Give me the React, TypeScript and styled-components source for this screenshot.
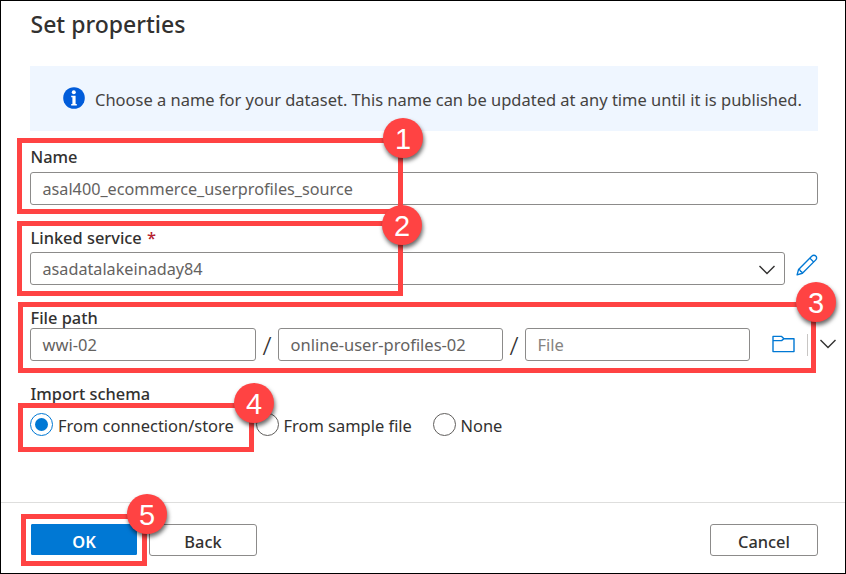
import React from "react";
import styled, { createGlobalStyle } from "styled-components";

const GlobalStyle = createGlobalStyle`
  * { box-sizing: border-box; }
  body { margin: 0; background: #fff; }
  svg { flex-shrink: 0; }
`;

const Panel = styled.main`
  position: relative;
  display: flex;
  flex-direction: column;
  width: 846px;
  height: 574px;
  border: 1px solid #000;
  background: #fff;
  color: #323130;
  font: 400 16.5px/22px "Noto Sans", "Segoe UI", sans-serif;
  overflow: hidden;
  white-space: nowrap;
`;

const Content = styled.div`
  display: flex;
  flex-direction: column;
  height: 501px;
  padding: 0 27px 0 29px;
`;

const Title = styled.h1`
  margin: 0;
  height: 65px;
  padding: 7px 0 0 0.5px;
  font-size: 23px;
  font-weight: 500;
  line-height: 32px;
`;

const Banner = styled.div`
  display: flex;
  align-items: flex-start;
  gap: 10px;
  height: 65px;
  padding: 21px 0 0 33px;
  background: #eff6ff;
  color: #45433f;
  font-size: 16.48px;
`;

const BannerText = styled.span`
  padding-top: 2px;
`;

const Field = styled.section<{ $gap: number; $labelHeight: number }>`
  display: flex;
  flex-direction: column;
  margin-top: ${(p) => p.$gap}px;
  > h2 { height: ${(p) => p.$labelHeight}px; }
`;

const Label = styled.h2`
  margin: 0;
  padding-left: 0.5px;
  font-size: 16.4px;
  font-weight: 500;
  line-height: 22px;
`;

const Required = styled.span`
  margin-left: 1px;
  color: #b5202e;
`;

const FieldRow = styled.div`
  display: flex;
  align-items: center;
  height: 33px;
`;

const Box = styled.div<{ $width: number; $muted?: boolean }>`
  display: flex;
  flex-shrink: 0;
  align-items: center;
  justify-content: space-between;
  width: ${(p) => p.$width}px;
  height: 33px;
  padding: 1px 9px 0 11.5px;
  border: 1.5px solid #8c8b8a;
  border-radius: 3px;
  color: ${(p) => (p.$muted ? "#858381" : "#64625f")};
  font-size: 16.22px;

  svg { margin-top: 1px; }
`;

const PathBox = styled(Box)`
  font-size: 16.5px;
`;

const Slash = styled.span`
  flex-shrink: 0;
  width: 22px;
  padding-top: 1px;
  text-align: center;
  font-size: 26px;
  font-weight: 300;
  line-height: 30px;
`;

const IconButton = styled.span<{ $left: number; $lift?: number }>`
  display: flex;
  margin-left: ${(p) => p.$left}px;
  padding-bottom: ${(p) => p.$lift ?? 0}px;
`;

const Separator = styled.span`
  flex-shrink: 0;
  width: 1px;
  height: 22px;
  margin-left: 12px;
  background: #c8c6c4;
`;

const Radios = styled.div`
  display: flex;
  align-items: center;
  height: 23px;
`;

const Option = styled.div<{ $width: number }>`
  display: flex;
  flex-shrink: 0;
  align-items: center;
  gap: 5px;
  width: ${(p) => p.$width}px;
  font-size: 16.45px;
`;

const OptionText = styled.span`
  padding-top: 2px;
`;

const Radio = styled.span<{ $on?: boolean }>`
  display: flex;
  align-items: center;
  justify-content: center;
  width: 23px;
  height: 23px;
  border: 1.3px solid ${(p) => (p.$on ? "#0078d4" : "#605e5c")};
  border-radius: 50%;

  &::after {
    content: "";
    width: 13px;
    height: 13px;
    border-radius: 50%;
    background: ${(p) => (p.$on ? "#0078d4" : "transparent")};
  }
`;

const Footer = styled.footer`
  display: flex;
  height: 71px;
  padding: 21px 27px 0 30px;
  border-top: 1px solid #dededd;
`;

const Button = styled.div<{ $primary?: boolean; $left?: string }>`
  display: flex;
  align-items: center;
  justify-content: center;
  width: ${(p) => (p.$primary ? 106 : 108)}px;
  height: ${(p) => (p.$primary ? 31 : 32)}px;
  margin-left: ${(p) => p.$left ?? "0"};
  padding-top: ${(p) => (p.$primary ? 4 : 3)}px;
  border: ${(p) => (p.$primary ? "1px solid #0078d4" : "1.5px solid #8c8b8a")};
  border-radius: ${(p) => (p.$primary ? 1 : 3)}px;
  background: ${(p) => (p.$primary ? "#0078d4" : "#fff")};
  color: ${(p) => (p.$primary ? "#fff" : "#323130")};
  font-size: 16.4px;
  font-weight: ${(p) => (p.$primary ? 600 : 500)};
`;

/* Numbered callouts float over the form. */
const Highlight = styled.div<{ $x: number; $y: number; $w: number; $h: number }>`
  position: absolute;
  left: ${(p) => p.$x - 1}px;
  top: ${(p) => p.$y - 1}px;
  width: ${(p) => p.$w}px;
  height: ${(p) => p.$h}px;
  border: 5px solid #ff4343;
`;

const Badge = styled.div<{ $x: number; $y: number }>`
  position: absolute;
  left: ${(p) => p.$x - 1}px;
  top: ${(p) => p.$y - 1}px;
  display: flex;
  align-items: center;
  justify-content: center;
  width: 40px;
  height: 40px;
  padding-top: 1px;
  border-radius: 50%;
  background: #ff4343;
  box-shadow: 1px 3px 4px rgba(0, 0, 0, 0.6);
  color: #fff;
  font: 400 29px/40px "Liberation Sans", Arial, sans-serif;
`;

const Chevron = () => (
  <svg width="16" height="10" viewBox="0 0 16 10" fill="none" stroke="#323130" strokeWidth="1.4">
    <path d="M.5 1 8 8.6 15.5 1" />
  </svg>
);

const InfoIcon = () => (
  <svg width="22" height="22" viewBox="0 0 22 22">
    <circle cx="11" cy="11" r="10.8" fill="#015cda" />
    <circle cx="10.8" cy="5.3" r="2" fill="#fff" />
    <path d="M8.2 8.7h4.4v8.2h1.2v1.6H8.2v-1.6h1.2v-6.6H8.2z" fill="#fff" />
  </svg>
);

const PencilIcon = () => (
  <svg width="22" height="22" viewBox="0 0 24 24" fill="none" stroke="#0078d4" strokeWidth="1.5" strokeLinejoin="round">
    <path d="M1.2 22.8 2.8 16.8 17.4 2.2a2.9 2.9 0 0 1 4.2 0 2.9 2.9 0 0 1 0 4.2L7 21z" />
    <path d="M15.1 4.5 19.3 8.7M2.8 16.8C4 17 4.7 17.4 5 18.8 6.3 19.2 6.8 19.8 7 21" />
  </svg>
);

const FolderIcon = () => (
  <svg width="23" height="18" viewBox="0 0 23 18" fill="none" stroke="#0078d4" strokeWidth="1.4" strokeLinejoin="round">
    <path d="M1 16.6V1.4h8.6l2.4 2.3H22v12.9zM1 5.6h8.6l2.4-1.9" />
  </svg>
);

const highlights = [
  { x: 17, y: 138, w: 386, h: 76 },
  { x: 17, y: 221, w: 386, h: 75 },
  { x: 18, y: 302, w: 798, h: 71 },
  { x: 18, y: 403, w: 236, h: 49 },
  { x: 21, y: 514, w: 126, h: 52 },
];

const badges = [
  { x: 383, y: 118 },
  { x: 382, y: 205 },
  { x: 796, y: 282 },
  { x: 234, y: 383 },
  { x: 127, y: 494 },
];

export default function App() {
  return (
    <Panel>
      <GlobalStyle />
      <Content>
        <Title>Set properties</Title>
        <Banner>
          <InfoIcon />
          <BannerText>Choose a name for your dataset. This name can be updated at any time until it is published.</BannerText>
        </Banner>
        <Field $gap={15} $labelHeight={26}>
          <Label>Name</Label>
          <FieldRow>
            <Box $width={788}>asal400_ecommerce_userprofiles_source</Box>
          </FieldRow>
        </Field>
        <Field $gap={22} $labelHeight={25}>
          <Label>
            Linked service <Required>*</Required>
          </Label>
          <FieldRow>
            <Box $width={755}>
              asadatalakeinaday84
              <Chevron />
            </Box>
            <IconButton $left={11} $lift={7}>
              <PencilIcon />
            </IconButton>
          </FieldRow>
        </Field>
        <Field $gap={22} $labelHeight={21}>
          <Label>File path</Label>
          <FieldRow>
            <PathBox $width={226}>wwi-02</PathBox>
            <Slash>/</Slash>
            <PathBox $width={225}>online-user-profiles-02</PathBox>
            <Slash>/</Slash>
            <PathBox $width={225} $muted>
              File
            </PathBox>
            <IconButton $left={22} $lift={1}>
              <FolderIcon />
            </IconButton>
            <Separator />
            <IconButton $left={12} $lift={1}>
              <Chevron />
            </IconButton>
          </FieldRow>
        </Field>
        <Field $gap={22} $labelHeight={30}>
          <Label>Import schema</Label>
          <Radios>
            <Option $width={225.5}>
              <Radio $on />
              <OptionText>From connection/store</OptionText>
            </Option>
            <Option $width={177}>
              <Radio />
              <OptionText>From sample file</OptionText>
            </Option>
            <Option $width={80}>
              <Radio />
              <OptionText>None</OptionText>
            </Option>
          </Radios>
        </Field>
      </Content>
      <Footer>
        <Button $primary>OK</Button>
        <Button $left="12px">Back</Button>
        <Button $left="auto">Cancel</Button>
      </Footer>
      {highlights.map((h, i) => (
        <Highlight key={i} $x={h.x} $y={h.y} $w={h.w} $h={h.h} />
      ))}
      {badges.map((b, i) => (
        <Badge key={i} $x={b.x} $y={b.y}>
          {i + 1}
        </Badge>
      ))}
    </Panel>
  );
}
